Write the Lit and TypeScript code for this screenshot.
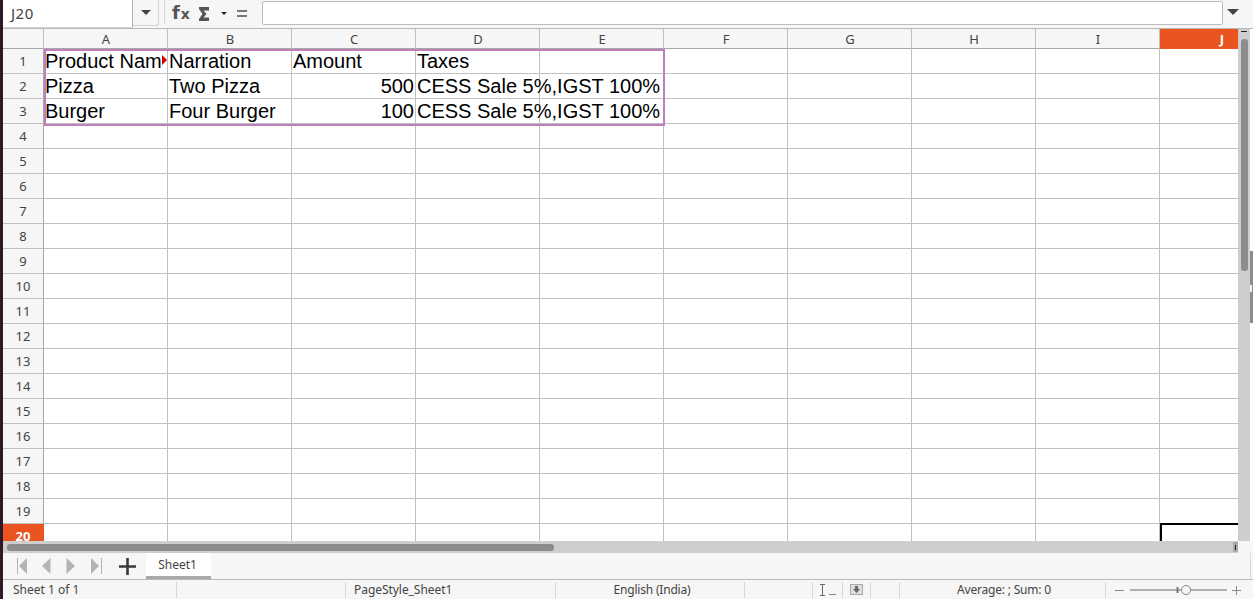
import { LitElement, html, css, svg } from "lit";
import { customElement } from "lit/decorators.js";

const COLS = ["A", "B", "C", "D", "E", "F", "G", "H", "I", "J"];
const ROWS = Array.from({ length: 20 }, (_, i) => i + 1);

interface Cell { t: string; right?: boolean; clip?: boolean }
const DATA: Record<string, Cell> = {
  A1: { t: "Product Name", clip: true }, B1: { t: "Narration" }, C1: { t: "Amount" }, D1: { t: "Taxes" },
  A2: { t: "Pizza" }, B2: { t: "Two Pizza" }, C2: { t: "500", right: true }, D2: { t: "CESS Sale 5%,IGST 100%" },
  A3: { t: "Burger" }, B3: { t: "Four Burger" }, C3: { t: "100", right: true }, D3: { t: "CESS Sale 5%,IGST 100%" },
};

@customElement("app-root")
export class AppRoot extends LitElement {
  static styles = css`
    :host { display: flex; width: 1253px; height: 599px; overflow: hidden; background: #f6f6f6;
      font-family: "Noto Sans", "Open Sans", sans-serif; font-size: 12px; color: #3c3c3c; }
    .strip { width: 3px; flex: none; background: #2c1a28; }
    .main { flex: 1; min-width: 0; display: flex; flex-direction: column; }

    .fbar { height: 28px; flex: none; display: flex; align-items: stretch; border-bottom: 1px solid #b8b8b8; background: #f6f6f6; box-sizing: content-box; }
    .namebox { width: 130px; flex: none; background: #fff; border-right: 1px solid #b4b4b4; border-bottom: 1px solid #d4d4d4; border-radius: 0 0 0 3px;
      display: flex; align-items: center; padding: 0 0 2px 8px; box-sizing: border-box; font-size: 15px; letter-spacing: 0.5px; color: #444; }
    .drop { width: 26px; flex: none; display: flex; align-items: center; justify-content: center; border-right: 1px solid #d4d4d4; border-bottom: 1px solid #d4d4d4; border-radius: 0 0 3px 0; box-sizing: border-box; margin-bottom: 2px; }
    .sep { width: 1px; flex: none; background: #d4d4d4; margin: 0 0 4px 5px; }
    .tools { width: 97px; flex: none; display: flex; align-items: center; padding-left: 7px; box-sizing: border-box; }
    .fx { font-family: "DejaVu Sans", sans-serif; font-weight: 700; color: #555; width: 27px; flex: none; line-height: 1; display: flex; align-items: baseline; font-size: 18px; margin-top: -3px; }
    .fx b { font-size: 14px; margin-left: 1px; }
    .sigma { width: 22px; flex: none; display: block; }
    .tri { width: 0; height: 0; flex: none; border: 3px solid transparent; border-top: 3px solid #222; border-bottom: 0; margin-right: 10px; margin-top: -2px; }
    .eq { width: 10px; height: 7px; flex: none; box-sizing: border-box; border-top: 2px solid #777; border-bottom: 2px solid #777; margin-top: -1px; }
    .input { flex: 1; margin: 1px 0 3px; background: #fff; border: 1px solid #bdbdbd; border-radius: 2px; }
    .fdrop { width: 19px; flex: none; margin-right: 11px; display: flex; align-items: center; justify-content: center; padding-bottom: 5px; padding-left: 1px; box-sizing: border-box; }

    .sheet { flex: none; height: 512px; display: flex; }
    .grid { width: 1235px; flex: none; overflow: hidden; position: relative; background: #fff; display: grid;
      grid-template-columns: 41px repeat(10, 124px); grid-auto-rows: 25px; grid-template-rows: 20px; align-content: start; }
    .corner, .ch, .rh { background: #f6f6f6; box-sizing: border-box; display: flex; align-items: center; justify-content: center;
      font-size: 13px; color: #444; }
    .corner, .ch { border-bottom: 1px solid #a8a8a8; border-right: 1px solid #c0c0c0; }
    .ch { padding-left: 1px; }
    .rh { border-right: 1px solid #a8a8a8; border-bottom: 1px solid #c0c0c0; padding-bottom: 1px; }
    .ch.active, .rh.active { background: #e95420; color: #fff; font-weight: 700; border-color: #e95420; }
    .c { border-right: 1px solid #c0c0c0; border-bottom: 1px solid #c0c0c0; box-sizing: border-box; font-family: "Liberation Sans", Arial, sans-serif;
      font-size: 20px; color: #000; padding: 0 1px 0 1px; white-space: nowrap; line-height: 24px; position: relative; min-width: 0; }
    .c.right { text-align: right; }
    .c .cut { display: block; width: 117px; overflow: hidden; }
    .clipmark { position: absolute; left: 159px; top: 26px; width: 0; height: 0; border-left: 5px solid #d00000; border-top: 5px solid transparent; border-bottom: 5px solid transparent; }
    .sel { position: absolute; left: 41px; top: 20px; width: 621px; height: 77px; box-sizing: border-box; border: 2px solid #bf7fbf; pointer-events: none; }
    .cursor { position: absolute; left: 1157px; top: 494px; width: 124px; height: 40px; box-sizing: border-box; border: 2px solid #000; pointer-events: none; }

    .vs { width: 12px; flex: none; background: #cecece; display: flex; flex-direction: column; align-items: center; }
    .vs .cap { width: 6px; height: 1px; flex: none; background: #222; margin-top: 2px; }
    .vs .thumb { width: 7px; height: 232px; flex: none; margin-top: 7px; border-radius: 3px; background: #8c8c8c; }
    .rest { flex: 1; background: #fff; position: relative; }
    .handle { position: absolute; left: 0; top: 222px; width: 3px; height: 72px; background: #8c8c8c; }
    .notch { position: absolute; left: 0; top: 34px; width: 2px; height: 7px; background: #f0f0f0; }

    .hs { height: 12px; flex: none; margin-right: 15px; background: #cecece; display: flex; align-items: center; padding-left: 4px; box-sizing: border-box; justify-content: space-between; }
    .hs .thumb { width: 547px; flex: none; height: 7px; border-radius: 3px; background: #8c8c8c; }
    .hs .end { width: 5px; flex: none; height: 10px; background: #a8a8a8; display: flex; align-items: center; justify-content: center; }
    .hs .end i { width: 1px; height: 5px; background: #222; display: block; }

    .tabs { height: 26px; flex: none; display: flex; align-items: stretch; border-bottom: 1px solid #b8b8b8; box-sizing: content-box; }
    .nav { display: flex; align-items: center; width: 115px; flex: none; padding-left: 14px; box-sizing: border-box; }
    .nav svg { display: block; flex: none; }
    .n2 { margin-left: 14px; }
    .n3 { margin-left: 15px; }
    .n4 { margin-left: 16px; }
    .plus { width: 27px; flex: none; display: flex; align-items: center; justify-content: center; margin-left: -4px; }
    .tab { width: 65px; margin-left: 5px; background: #fff; border-bottom: 3px solid #a8a8a8; display: flex; align-items: center; justify-content: center; font-size: 12px; color: #444; box-sizing: border-box; padding-right: 2px; }
    .edge { margin-left: auto; margin-right: 2px; width: 1px; background: #dcdcdc; }

    .status { flex: 1; display: flex; align-items: center; font-size: 12px; color: #444; }
    .st { box-sizing: border-box; height: 16px; display: flex; align-items: center; flex: none; border-right: 1px solid #d8d8d8; }
    .s1 { width: 174px; padding-left: 10px; }
    .s2 { width: 169px; }
    .s3 { width: 210px; padding-left: 8px; letter-spacing: -0.05px; }
    .s4 { width: 189px; justify-content: center; padding-left: 4px; letter-spacing: -0.2px; }
    .s5 { width: 68px; }
    .s6 { width: 30px; justify-content: center; }
    .s7 { width: 28px; justify-content: center; }
    .s8 { width: 29px; }
    .s9 { width: 206px; justify-content: center; padding-left: 3px; letter-spacing: -0.2px; }
    .zoom { display: flex; align-items: center; padding-left: 9px; flex: none; }
  `;

  private cell(c: string, r: number) {
    const d = DATA[`${c}${r}`];
    const cls = d?.right ? "c right" : "c";
    return html`<div class=${cls}>${d ? (d.clip ? html`<span class="cut">${d.t}</span>` : d.t) : ""}</div>`;
  }

  private caret(color: string, w: number, h: number) {
    return svg`<svg width=${w} height=${h} viewBox="0 0 14 7"><path d="M0 0H14L7 7Z" fill=${color}/></svg>`;
  }

  render() {
    return html`
      <div class="strip"></div>
      <div class="main">
        <div class="fbar">
          <div class="namebox">J20</div>
          <div class="drop">${this.caret("#444", 10, 5)}</div>
          <div class="sep"></div>
          <div class="tools">
            <span class="fx">f<b>x</b></span>
            <svg class="sigma" width="22" height="14" viewBox="0 0 22 14"><path d="M0 0H10V3.5H4.5L7.5 7L4.5 10.5H10V14H0V12L3.5 7L0 2Z" fill="#555"/></svg>
            <span class="tri"></span>
            <span class="eq"></span>
          </div>
          <div class="input"></div>
          <div class="fdrop">${this.caret("#444", 12, 6)}</div>
        </div>
        <div class="sheet">
          <div class="grid">
            <div class="corner"></div>
            ${COLS.map((c) => html`<div class="ch ${c === "J" ? "active" : ""}">${c}</div>`)}
            ${ROWS.map((r) => html`
              <div class="rh ${r === 20 ? "active" : ""}">${r}</div>
              ${COLS.map((c) => this.cell(c, r))}
            `)}
            <div class="clipmark"></div>
            <div class="sel"></div>
            <div class="cursor"></div>
          </div>
          <div class="vs"><div class="cap"></div><div class="thumb"></div></div>
          <div class="rest"><div class="handle"><div class="notch"></div></div></div>
        </div>
        <div class="hs"><div class="thumb"></div><div class="end"><i></i></div></div>
        <div class="tabs">
          <div class="nav">
            <svg width="10" height="16" viewBox="0 0 10 16"><path d="M.5 0V16" stroke="#b4b4b4"/><path d="M10 0V16L2 8Z" fill="#b4b4b4"/></svg>
            <svg class="n2" width="10" height="16" viewBox="0 0 10 16"><path d="M9.5 0V16L1 8Z" fill="#b4b4b4"/></svg>
            <svg class="n3" width="9" height="16" viewBox="0 0 9 16"><path d="M.5 0V16L9 8Z" fill="#b4b4b4"/></svg>
            <svg class="n4" width="11" height="16" viewBox="0 0 11 16"><path d="M0 0V16L8 8Z" fill="#b4b4b4"/><path d="M10.5 0V16" stroke="#b4b4b4"/></svg>
          </div>
          <div class="plus"><svg width="17" height="17" viewBox="0 0 17 17"><path d="M0 8.5H17M8.5 0V17" stroke="#3a3a3a" stroke-width="2.6"/></svg></div>
          <div class="tab">Sheet1</div>
          <div class="edge"></div>
        </div>
        <div class="status">
          <div class="st s1">Sheet 1 of 1</div>
          <div class="st s2"></div>
          <div class="st s3">PageStyle_Sheet1</div>
          <div class="st s4">English (India)</div>
          <div class="st s5"></div>
          <div class="st s6"><svg width="19" height="12" viewBox="0 0 19 12"><path d="M2 .5H7M2 11.5H7M4.5 .5V11.5" stroke="#666" fill="none"/><path d="M11 10.5H18" stroke="#888"/></svg></div>
          <div class="st s7"><svg width="13" height="11" viewBox="0 0 13 11"><rect x=".5" y=".5" width="12" height="10" fill="#ddd" stroke="#aaa"/><path d="M5 2H8V5H10L6.5 9L3 5H5Z" fill="#666"/></svg></div>
          <div class="st s8"></div>
          <div class="st s9">Average: ; Sum: 0</div>
          <div class="zoom">
            <svg width="127" height="12" viewBox="0 0 127 12">
              <path d="M0 6.5H9M117 6.5H126" stroke="#888"/>
              <path d="M121.5 2V11" stroke="#888"/>
              <path d="M15 6H112" stroke="#999" stroke-width="1.4"/>
              <path d="M62.5 3V9" stroke="#777" stroke-width="2"/>
              <circle cx="71" cy="6" r="4.5" fill="#f6f6f6" stroke="#888"/>
            </svg>
          </div>
        </div>
      </div>
    `;
  }
}
